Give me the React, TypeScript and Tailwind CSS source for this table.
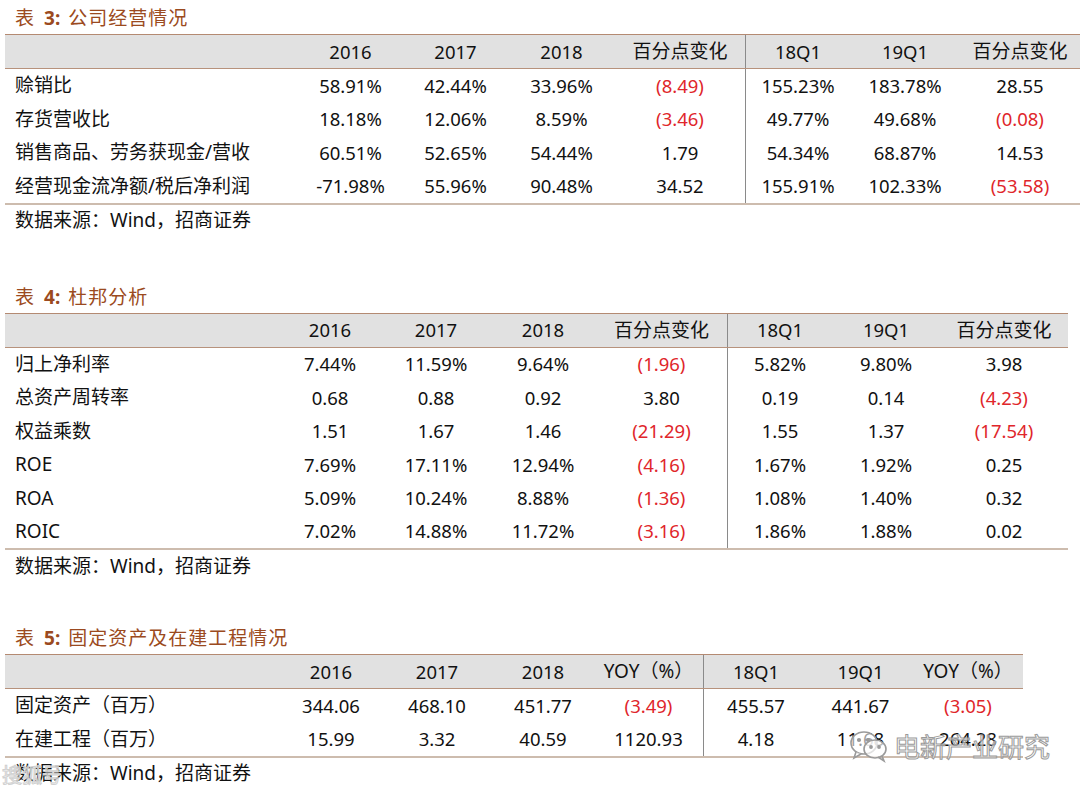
import React from "react";

type Cell = string;
type Row = { label: string; cells: Cell[] };

interface TableProps {
  no: string;
  title: string;
  cols: string;
  width: string;
  headers: string[];
  rows: Row[];
}

const red = (v: string) => v.startsWith("(");

function DataTable({ no, title, cols, width, headers, rows }: TableProps) {
  return (
    <div>
      {/* title */}
      <div className="h-[31px] flex items-center pl-[15px] text-[#9b4a20] text-[19px]">
        <span>表</span>
        <span className="ml-[10px] font-bold font-['Noto_Sans']">{no}:</span>
        <span className="ml-[8px] tracking-[1px]">{title}</span>
      </div>

      <div className={`ml-[5px] ${width} border-t border-[#b48a72] border-b-2 border-b-[#cdbcae]`}>
        {/* header */}
        <div className={`grid ${cols} h-[34px] bg-[#e1e1e1] border-b border-[#b7927c] items-center text-[#111]`}>
          <div />
          {headers.map((h, i) => (
            <div
              key={i}
              className={`text-center h-full flex items-center justify-center ${
                i === 4 ? "border-l border-[#8a8a8a]" : ""
              } ${/^[0-9]/.test(h) ? "text-[18.5px]" : "text-[19px]"}`}
            >
              {h}
            </div>
          ))}
        </div>

        {/* rows */}
        {rows.map((r, ri) => (
          <div key={ri} className={`grid ${cols} h-[33.4px] items-center`}>
            <div className="pl-[10px] text-[19px] text-[#111] whitespace-nowrap">{r.label}</div>
            {r.cells.map((c, i) => (
              <div
                key={i}
                className={`text-center text-[18.5px] h-full flex items-center justify-center ${
                  i === 4 ? "border-l border-[#8a8a8a]" : ""
                } ${red(c) ? "text-[#e0262b]" : "text-[#111]"}`}
              >
                {c}
              </div>
            ))}
          </div>
        ))}
      </div>

      <div className="h-[32px] flex items-center pl-[15px] text-[19px] text-[#111]">
        数据来源：Wind，招商证券
      </div>
    </div>
  );
}

export default function App() {
  const pctHead = ["2016", "2017", "2018", "百分点变化", "18Q1", "19Q1", "百分点变化"];

  return (
    <div className="relative w-[1080px] h-[794px] pt-[3px] bg-white overflow-hidden font-['Noto_Sans','Noto_Sans_CJK_SC',sans-serif]">
      <DataTable
        no="3"
        title="公司经营情况"
        width="w-[1075px]"
        cols="grid-cols-[293px_105px_105px_107px_130px_105px_110px_120px]"
        headers={pctHead}
        rows={[
          { label: "赊销比", cells: ["58.91%", "42.44%", "33.96%", "(8.49)", "155.23%", "183.78%", "28.55"] },
          { label: "存货营收比", cells: ["18.18%", "12.06%", "8.59%", "(3.46)", "49.77%", "49.68%", "(0.08)"] },
          { label: "销售商品、劳务获现金/营收", cells: ["60.51%", "52.65%", "54.44%", "1.79", "54.34%", "68.87%", "14.53"] },
          { label: "经营现金流净额/税后净利润", cells: ["-71.98%", "55.96%", "90.48%", "34.52", "155.91%", "102.33%", "(53.58)"] },
        ]}
      />

      <div className="h-[45px]" />

      <DataTable
        no="4"
        title="杜邦分析"
        width="w-[1063px]"
        cols="grid-cols-[273px_104px_108px_106px_131px_105px_108px_128px]"
        headers={pctHead}
        rows={[
          { label: "归上净利率", cells: ["7.44%", "11.59%", "9.64%", "(1.96)", "5.82%", "9.80%", "3.98"] },
          { label: "总资产周转率", cells: ["0.68", "0.88", "0.92", "3.80", "0.19", "0.14", "(4.23)"] },
          { label: "权益乘数", cells: ["1.51", "1.67", "1.46", "(21.29)", "1.55", "1.37", "(17.54)"] },
          { label: "ROE", cells: ["7.69%", "17.11%", "12.94%", "(4.16)", "1.67%", "1.92%", "0.25"] },
          { label: "ROA", cells: ["5.09%", "10.24%", "8.88%", "(1.36)", "1.08%", "1.40%", "0.32"] },
          { label: "ROIC", cells: ["7.02%", "14.88%", "11.72%", "(3.16)", "1.86%", "1.88%", "0.02"] },
        ]}
      />

      <div className="h-[41px]" />

      <DataTable
        no="5"
        title="固定资产及在建工程情况"
        width="w-[1018px]"
        cols="grid-cols-[275px_102px_110px_102px_109px_105px_105px_110px]"
        headers={["2016", "2017", "2018", "YOY（%）", "18Q1", "19Q1", "YOY（%）"]}
        rows={[
          { label: "固定资产（百万）", cells: ["344.06", "468.10", "451.77", "(3.49)", "455.57", "441.67", "(3.05)"] },
          { label: "在建工程（百万）", cells: ["15.99", "3.32", "40.59", "1120.93", "4.18", "11.68", "264.28"] },
        ]}
      />

      {/* watermark bottom right */}
      <div className="absolute left-[848px] top-[726px] flex items-center gap-[4px] pointer-events-none">
        <svg width="42" height="36" viewBox="0 0 42 36" fill="none" stroke="#9a9a9a" strokeWidth="1.6">
          <ellipse cx="16" cy="15" rx="13" ry="11" fill="rgba(255,255,255,0.6)" />
          <path d="M8 24 L6 30 L13 26" fill="rgba(255,255,255,0.6)" />
          <ellipse cx="27" cy="21" rx="11" ry="9" fill="rgba(255,255,255,0.7)" />
          <path d="M34 28 L36 33 L30 29" />
          <circle cx="11" cy="12" r="1.3" fill="#9a9a9a" />
          <circle cx="20" cy="12" r="1.3" fill="#9a9a9a" />
          <circle cx="23" cy="19" r="1.1" fill="#9a9a9a" />
          <circle cx="31" cy="19" r="1.1" fill="#9a9a9a" />
        </svg>
        <span className="text-[26px] text-[rgba(255,255,255,0.55)] [-webkit-text-stroke:1px_#9a9a9a] font-['Noto_Sans_CJK_SC',sans-serif]">
          电新产业研究
        </span>
      </div>

      {/* watermark bottom left */}
      <div className="absolute left-[2px] top-[760px] text-[20px] text-[rgba(255,255,255,0.45)] [-webkit-text-stroke:1px_#d0d0d0] font-['Noto_Sans_CJK_SC',sans-serif] pointer-events-none">
        搜狐号
      </div>
    </div>
  );
}
